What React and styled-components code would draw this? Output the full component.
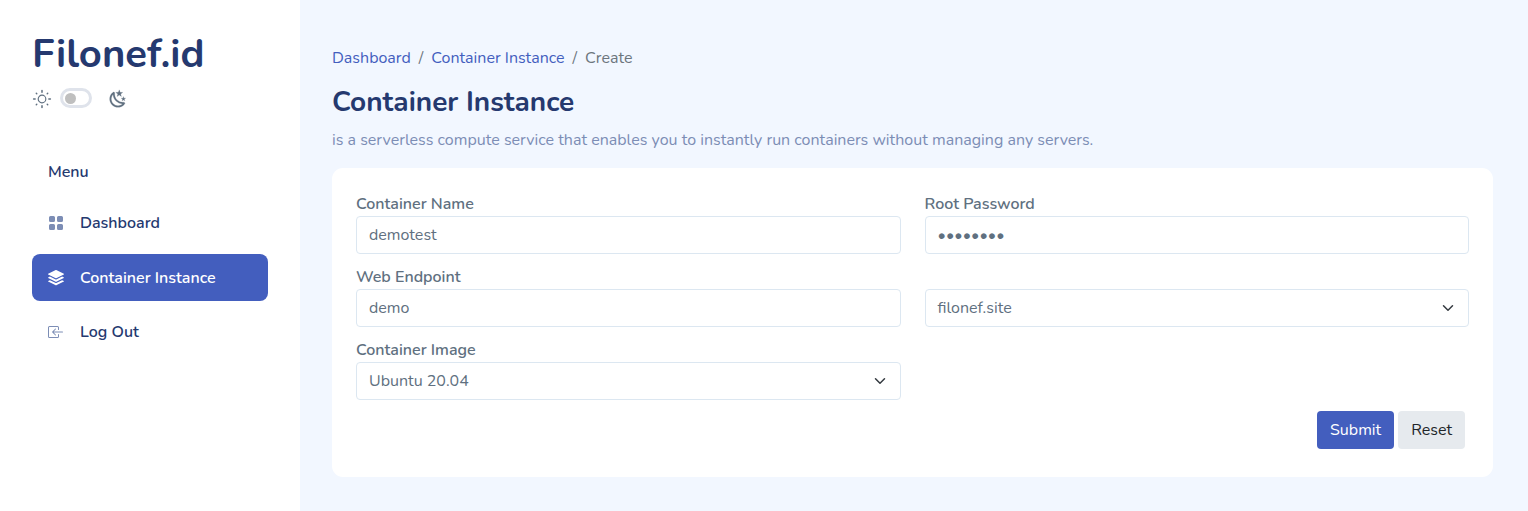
import React from 'react';
import styled, { createGlobalStyle } from 'styled-components';
import { BsGridFill, BsStack, BsBoxArrowInLeft } from 'react-icons/bs';

const GlobalStyle = createGlobalStyle`
  *, *::before, *::after { box-sizing: border-box; }
  body {
    margin: 0;
    background: #f2f7ff;
    color: #607080;
    font-family: Nunito, Lato, sans-serif;
    font-size: 16px;
    line-height: 24px;
    overflow: hidden;
  }
`;

const Page = styled.div`
  display: flex;
  height: 511px;
`;

const Sidebar = styled.aside`
  flex: 0 0 300px;
  background: #fff;
  padding: 30px 32px 0;
`;

const Brand = styled.h1`
  margin: 0;
  height: 48px;
  color: #25396f;
  font-size: 40px;
  font-weight: 700;
  line-height: 48px;
`;

const ThemeRow = styled.div`
  display: flex;
  align-items: center;
  height: 24px;
  margin-top: 9px;
`;

const Switch = styled.span`
  display: flex;
  align-items: center;
  width: 32px;
  height: 20px;
  margin: 0 16px 2px 8px;
  padding-left: 1.5px;
  border: 3px solid #dfe3eb;
  border-radius: 10px;
`;

const Knob = styled.span`
  width: 11px;
  height: 11px;
  border-radius: 50%;
  background: #bfbfbf;
`;

const MenuTitle = styled.div`
  margin-top: 49px;
  padding-left: 16px;
  color: #25396f;
  font-weight: 600;
`;

const MenuItem = styled.a`
  display: flex;
  align-items: center;
  gap: 16px;
  height: 46.4px;
  margin-top: ${(p) => (p.$first ? 16 : 8)}px;
  padding: 0 16px;
  border-radius: 8px;
  background: ${(p) => (p.$active ? '#435ebe' : 'transparent')};
  color: ${(p) => (p.$active ? '#fff' : '#25396f')};
  font-weight: 600;

  svg { color: ${(p) => (p.$active ? '#fff' : '#7c8db5')}; }
`;

const Main = styled.main`
  flex: 1;
  padding: 46px 35px 0 32px;
`;

const Breadcrumb = styled.nav`
  display: flex;
  gap: 8px;
  color: #6c757d;
`;

const Crumb = styled.a`
  color: #435ebe;
`;

const Title = styled.h3`
  margin: 15px 0 0;
  color: #25396f;
  font-size: 28px;
  font-weight: 700;
  line-height: 34px;
`;

const Subtitle = styled.p`
  margin: 9px 0 16px;
  color: #7c8db5;
`;

const Card = styled.form`
  height: 309px;
  padding: 24px;
  border-radius: 11px;
  background: #fff;
`;

const Fields = styled.div`
  display: grid;
  grid-template-columns: 1fr 1fr;
  gap: 11px 24px;
`;

const Field = styled.div`
  display: flex;
  flex-direction: column;
`;

const Label = styled.label`
  height: 24px;
  font-weight: 600;
`;

const Input = styled.input`
  height: 38px;
  padding: 0 12px;
  border: 1px solid #dce7f1;
  border-radius: 4px;
  background: #fff;
  color: #607080;
  font: inherit;
`;

const Select = styled.div`
  display: flex;
  align-items: center;
  justify-content: space-between;
  height: 38px;
  padding: 0 12px;
  border: 1px solid #dce7f1;
  border-radius: 4px;
`;

const Actions = styled.div`
  display: flex;
  justify-content: flex-end;
  gap: 4px;
  margin-top: 11px;
  padding-right: 4px;
`;

const Button = styled.button`
  height: 38px;
  padding: 0 13px;
  border: 0;
  border-radius: 4px;
  background: ${(p) => (p.$primary ? '#435ebe' : '#e6eaee')};
  color: ${(p) => (p.$primary ? '#fff' : '#212529')};
  font: inherit;
`;

const SunIcon = () => (
  <svg width="20" height="20" viewBox="0 0 21 21" fill="none" stroke="currentColor" strokeLinecap="round" strokeLinejoin="round">
    <circle cx="10.5" cy="10.5" r="4" strokeWidth="1.2" />
    <path d="M10.5 1.7v1.6m0 14.4v1.6M1.7 10.5h1.6m14.4 0h1.6" strokeWidth="1.6" />
    <path d="M4.5 4.5l.5.5m11 11l.5.5M4.5 16.5l.5-.5M16 5l.5-.5" strokeWidth="1.5" />
  </svg>
);

const MoonIcon = () => (
  <svg width="20" height="20" viewBox="0 0 24 24" fill="currentColor" stroke="currentColor" strokeWidth=".25">
    <path d="m17.75 4.09l-2.53 1.94l.91 3.06l-2.63-1.81l-2.63 1.81l.91-3.06l-2.53-1.94L12.44 4l1.06-3l1.06 3l3.19.09m3.5 6.91l-1.64 1.25l.59 1.98l-1.7-1.17l-1.7 1.17l.59-1.98L15.75 11l2.06-.05L18.5 9l.69 1.95l2.06.05m-2.28 4.95c.83-.08 1.72 1.1 1.19 1.85c-.32.45-.66.87-1.08 1.27C15.17 23 8.84 23 4.94 19.07c-3.91-3.9-3.91-10.24 0-14.14c.4-.4.82-.76 1.27-1.08c.75-.53 1.93.36 1.85 1.19c-.27 2.86.69 5.83 2.89 8.02a9.96 9.96 0 0 0 8.02 2.89m-1.64 2.02a12.08 12.08 0 0 1-7.8-3.47c-2.17-2.19-3.33-5-3.49-7.82c-2.81 3.14-2.7 7.96.31 10.98c3.02 3.01 7.84 3.12 10.98.31Z" />
  </svg>
);

const Chevron = () => (
  <svg width="16" height="12" viewBox="0 0 16 16" fill="none" stroke="#343a40" strokeWidth="2" strokeLinecap="round" strokeLinejoin="round">
    <path d="m2 5 6 6 6-6" />
  </svg>
);

export default function App() {
  return (
    <>
      <GlobalStyle />
      <Page>
        <Sidebar>
          <Brand>Filonef.id</Brand>
          <ThemeRow>
            <SunIcon />
            <Switch><Knob /></Switch>
            <MoonIcon />
          </ThemeRow>
          <MenuTitle>Menu</MenuTitle>
          <MenuItem $first><BsGridFill size={16} />Dashboard</MenuItem>
          <MenuItem $active><BsStack size={16} />Container Instance</MenuItem>
          <MenuItem><BsBoxArrowInLeft size={16} />Log Out</MenuItem>
        </Sidebar>
        <Main>
          <Breadcrumb>
            <Crumb>Dashboard</Crumb>
            <span>/</span>
            <Crumb>Container Instance</Crumb>
            <span>/</span>
            <span>Create</span>
          </Breadcrumb>
          <Title>Container Instance</Title>
          <Subtitle>
            is a serverless compute service that enables you to instantly run containers without managing any servers.
          </Subtitle>
          <Card>
            <Fields>
              <Field>
                <Label>Container Name</Label>
                <Input defaultValue="demotest" />
              </Field>
              <Field>
                <Label>Root Password</Label>
                <Input type="password" defaultValue="demotest" />
              </Field>
              <Field>
                <Label>Web Endpoint</Label>
                <Input defaultValue="demo" />
              </Field>
              <Field>
                <Label />
                <Select>filonef.site<Chevron /></Select>
              </Field>
              <Field>
                <Label>Container Image</Label>
                <Select>Ubuntu 20.04<Chevron /></Select>
              </Field>
            </Fields>
            <Actions>
              <Button type="button" $primary>Submit</Button>
              <Button type="button">Reset</Button>
            </Actions>
          </Card>
        </Main>
      </Page>
    </>
  );
}
